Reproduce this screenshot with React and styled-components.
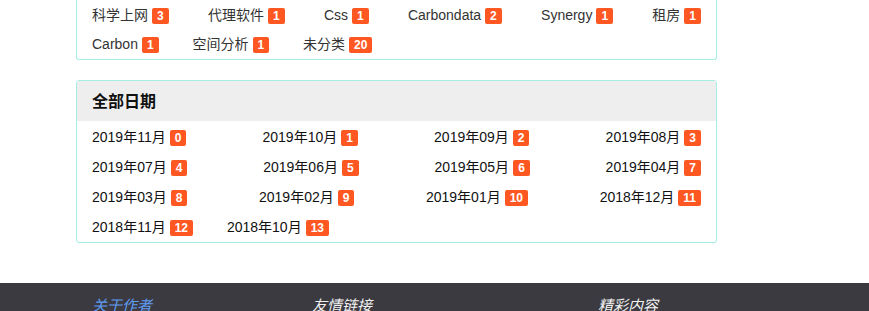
import React from 'react';
import styled, { createGlobalStyle } from 'styled-components';

const GlobalStyle = createGlobalStyle`
  body {
    margin: 0;
    background: #fff;
    font-family: "Liberation Sans", Arial, "Noto Sans CJK SC", sans-serif;
    font-size: 14px;
    color: #333;
  }
`;

const Page = styled.div`
  width: 869px;
  height: 311px;
  overflow: hidden;
  display: flex;
  flex-direction: column;
`;

const Main = styled.div`
  width: 641px;
  margin-left: 76px;
  display: flex;
  flex-direction: column;
  gap: 20px;
`;

const Card = styled.div`
  border: 1px solid #a4efe4;
  border-top: ${p => (p.$cut ? 'none' : '1px solid #a4efe4')};
  border-radius: ${p => (p.$cut ? '0 0 3px 3px' : '3px')};
  background: #fff;
`;

const CardHead = styled.div`
  height: 40px;
  line-height: 41px;
  padding: 0 15px;
  background: #eeeeee;
  font-size: 16px;
  font-weight: bold;
  color: #111;
`;

const ItemList = styled.div`
  box-sizing: border-box;
  text-align: justify;
  font-size: 14px;
  line-height: ${p => p.$lh}px;
  height: ${p => p.$h}px;
  padding-top: 1px;
  overflow: hidden;
`;

const Item = styled.a`
  display: inline-block;
  margin: 0 15px;
  color: ${p => (p.$dark ? '#111' : '#333')};
  text-decoration: none;
  white-space: nowrap;
`;

const Badge = styled.span`
  display: inline-block;
  margin-left: 4px;
  padding: 0 5px;
  min-width: 6px;
  height: 16px;
  line-height: 16px;
  border-radius: 2px;
  background: #ff5722;
  color: #fff;
  font-size: 12px;
  font-weight: bold;
  text-align: center;
`;

const Footer = styled.div`
  margin-top: 40px;
  flex: 1;
  background: #3b3a40;
  display: grid;
  grid-template-columns: 220px 286px 1fr;
  padding: 11px 0 0 92px;
`;

const FooterTitle = styled.div`
  font-size: 15px;
  font-style: italic;
  color: ${p => (p.$active ? '#5f9cf3' : '#f2f2f2')};
`;

const tags = [
  ['科学上网', 3], ['代理软件', 1], ['Css', 1], ['Carbondata', 2], ['Synergy', 1],
  ['租房', 1], ['Carbon', 1], ['空间分析', 1], ['未分类', 20],
];

const dates = [
  '2019年11月', '2019年10月', '2019年09月', '2019年08月', '2019年07月',
  '2019年06月', '2019年05月', '2019年04月', '2019年03月', '2019年02月',
  '2019年01月', '2018年12月', '2018年11月', '2018年10月',
];

export default function App() {
  return (
    <Page>
      <GlobalStyle />
      <Main>
        <Card $cut>
          <ItemList $lh={29} $h={59}>
            {tags.map(([name, n]) => (
              <React.Fragment key={name}>
                <Item href="#">{name}<Badge>{n}</Badge></Item>{' '}
              </React.Fragment>
            ))}
          </ItemList>
        </Card>
        <Card>
          <CardHead>全部日期</CardHead>
          <ItemList $lh={30} $h={121}>
            {dates.map((d, i) => (
              <React.Fragment key={d}>
                <Item href="#" $dark>{d}<Badge>{i}</Badge></Item>{' '}
              </React.Fragment>
            ))}
          </ItemList>
        </Card>
      </Main>
      <Footer>
        <FooterTitle $active>关于作者</FooterTitle>
        <FooterTitle>友情链接</FooterTitle>
        <FooterTitle>精彩内容</FooterTitle>
      </Footer>
    </Page>
  );
}
